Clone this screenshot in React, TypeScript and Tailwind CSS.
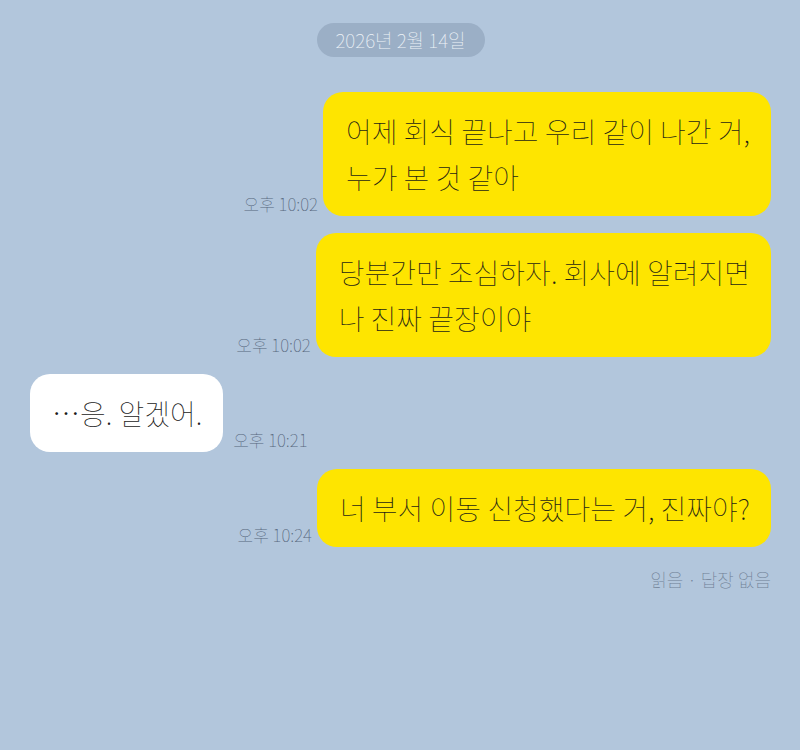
const FONT = "font-['Noto_Sans_CJK_KR','Noto_Sans',sans-serif]";

function Mine({ lines, time }: { lines: string[]; time: string }) {
  return (
    <div className="flex items-end justify-end gap-[5px]">
      <span className="text-[17px] leading-[22px] font-thin text-[#56677c] mb-[1px] whitespace-nowrap">{time}</span>
      <div className="bg-[#fee500] rounded-[20px] pl-[23px] pr-[21px] py-[16px] text-[28px] leading-[46px] font-thin text-[#1f1f14] whitespace-nowrap">
        {lines.map((l, i) => (
          <div key={i}>{l}</div>
        ))}
      </div>
    </div>
  );
}

export default function App() {
  return (
    <div className={`${FONT} w-[800px] h-[750px] bg-[#b2c6dc] pl-[30px] pr-[29px] pt-[23px]`}>
      <div className="flex justify-center">
        <div className="h-[34px] w-[168px] rounded-full bg-[#9bafc6] text-[#eef3f8] text-[19px] font-thin flex items-center justify-center">
          2026년 2월 14일
        </div>
      </div>

      <div className="mt-[35px] flex flex-col gap-[17px]">
        <Mine lines={["어제 회식 끝나고 우리 같이 나간 거,", "누가 본 것 같아"]} time="오후 10:02" />
        <Mine lines={["당분간만 조심하자. 회사에 알려지면", "나 진짜 끝장이야"]} time="오후 10:02" />
        <div className="flex items-end gap-[10px]">
          <div className="bg-white rounded-[20px] pl-[22px] pr-[21px] py-[16px] text-[28px] leading-[46px] font-thin text-[#1a1a1a] whitespace-nowrap">
            …응. 알겠어.
          </div>
          <span className="text-[17px] leading-[22px] font-thin text-[#56677c] mb-[1px] whitespace-nowrap">오후 10:21</span>
        </div>
        <Mine lines={["너 부서 이동 신청했다는 거, 진짜야?"]} time="오후 10:24" />
      </div>

      <div className="mt-[19px] text-right text-[18px] font-thin text-[#6f8096]">읽음 · 답장 없음</div>
    </div>
  );
}
